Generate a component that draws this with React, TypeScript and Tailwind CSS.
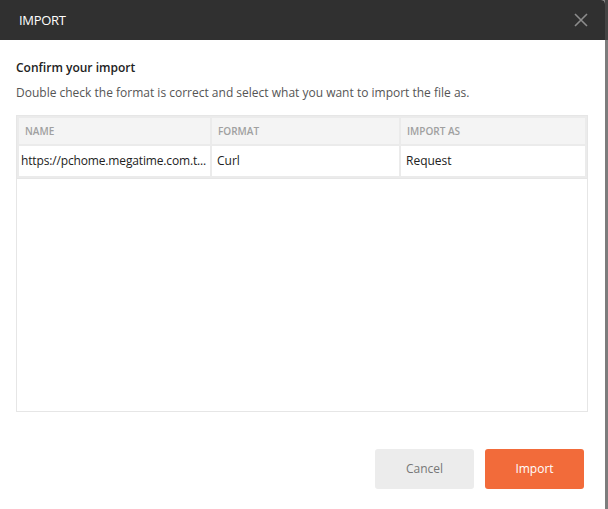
import React from "react";

export default function App() {
  const font = { fontFamily: '"Open Sans", "Noto Sans", sans-serif' };
  const head = "flex h-[30px] items-center border-[#ebebeb] bg-[#f4f4f4] pl-[6px] text-[10px] font-semibold text-[#a0a0a0]";
  const cell = "flex h-[32px] items-center overflow-hidden whitespace-nowrap border-[#ebebeb] text-[12px] text-[#222]";
  return (
    <div className="flex h-[509px] w-[608px] bg-[#7d7d7d]" style={font}>
      <div className="flex w-[605px] flex-col overflow-hidden rounded-tr-[4px] bg-white">
        <div className="flex h-[40px] items-center justify-between bg-[#303030] pl-[19px] pr-[16px]">
          <span className="text-[13px] leading-[16px] tracking-[-0.3px] text-white">IMPORT</span>
          <svg width="14" height="14" viewBox="0 0 14 14" className="mr-[1px]">
            <path d="M1 1 L13 13 M13 1 L1 13" stroke="#8c8c8c" strokeWidth="1.6" />
          </svg>
        </div>
        <div className="flex flex-1 flex-col px-[16px]">
          <div className="mt-[20px] text-[12px] font-semibold leading-[16px] text-[#222]">Confirm your import</div>
          <div className="mt-[9px] text-[12px] leading-[16px] text-[#555]">
            Double check the format is correct and select what you want to import the file as.
          </div>
          <div className="mt-[14px] h-[297px] w-[572px] border border-[#e6e6e6]">
            <div className="grid grid-cols-[194px_189px_187px] border-b border-[#e6e6e6]">
              <div className={head + " border-2 border-r"}>NAME</div>
              <div className={head + " border-x border-y-2"}>FORMAT</div>
              <div className={head + " border-2 border-l"}>IMPORT AS</div>
              <div className={cell + " border-x-2 border-b-2 border-r pl-[2px] tracking-[-0.15px]"}>https://pchome.megatime.com.t...</div>
              <div className={cell + " border-x border-b-2 pl-[5px]"}>Curl</div>
              <div className={cell + " border-x-2 border-b-2 border-l pl-[5px]"}>Request</div>
            </div>
          </div>
          <div className="mt-[37px] flex justify-end gap-[11px] pr-[5px]">
            <button className="h-[40px] w-[99px] rounded-[3px] bg-[#ececec] text-[12px] text-[#777]">Cancel</button>
            <button className="h-[40px] w-[99px] rounded-[3px] bg-[#f26b3a] text-[12px] text-white">Import</button>
          </div>
        </div>
      </div>
      <div className="flex w-[3px] flex-col">
        <div className="h-[40px] bg-[#444]" />
        <div className="flex-1 bg-[#7d7d7d]" />
      </div>
    </div>
  );
}
